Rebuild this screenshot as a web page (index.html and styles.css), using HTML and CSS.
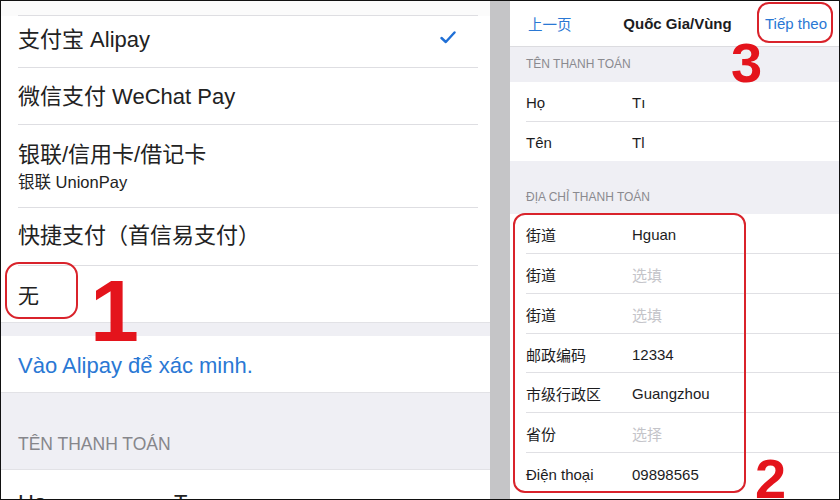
FILE: index.html
```html
<!DOCTYPE html>
<html lang="vi">
<head>
<meta charset="utf-8">
<title>Alipay payment setup</title>
<link rel="stylesheet" href="styles.css">
</head>
<body>
<div class="frame">
  <section class="pane pane-left">
    <div class="top-strip"><div class="top-line"></div></div>
    <div class="opt h52 up5"><span>支付宝 Alipay</span>
      <svg class="check" width="16" height="13" viewBox="0 0 16 13"><polyline points="1.5,7 5.8,11 14.5,1.5" fill="none" stroke="#1f6fd6" stroke-width="2.4" stroke-linecap="round" stroke-linejoin="round"/></svg>
    </div>
    <div class="opt h57 up3"><span>微信支付 WeChat Pay</span></div>
    <div class="opt opt-two h83">
      <span>银联/信用卡/借记卡</span>
      <span class="sub">银联 UnionPay</span>
    </div>
    <div class="opt h58 up4"><span>快捷支付（首信易支付）</span></div>
    <div class="opt opt-last h56"><span class="none">无</span></div>
    <div class="band h14"></div>
    <div class="link-row"><span>Vào Alipay để xác minh.</span></div>
    <div class="band band-head"><span>TÊN THANH TOÁN</span></div>
    <div class="name-row"><span class="nlabel">Họ</span><span>T</span></div>
  </section>
  <div class="divider"></div>
  <section class="pane pane-right">
    <nav class="navbar">
      <span class="nav-back">上一页</span>
      <span class="nav-title">Quốc Gia/Vùng</span>
      <span class="nav-next">Tiếp theo</span>
    </nav>
    <div class="sec sec-first">TÊN THANH TOÁN</div>
    <div class="frow r40"><span class="flabel">Họ</span><span class="fval">Tı</span></div>
    <div class="frow r39 nol"><span class="flabel">Tên</span><span class="fval">Tl</span></div>
    <div class="sec sec-second">ĐỊA CHỈ THANH TOÁN</div>
    <div class="frow r40"><span class="flabel">街道</span><span class="fval">Hguan</span></div>
    <div class="frow r40"><span class="flabel">街道</span><span class="fval ph">选填</span></div>
    <div class="frow r40"><span class="flabel">街道</span><span class="fval ph">选填</span></div>
    <div class="frow r39"><span class="flabel">邮政编码</span><span class="fval">12334</span></div>
    <div class="frow r40"><span class="flabel">市级行政区</span><span class="fval">Guangzhou</span></div>
    <div class="frow r40"><span class="flabel">省份</span><span class="fval ph">选择</span></div>
    <div class="frow r40 nol"><span class="flabel">Điện thoại</span><span class="fval">09898565</span></div>
  </section>

  <div class="ring ring-1"></div>
  <div class="num num-1">1</div>
  <div class="ring ring-3"></div>
  <div class="num num-3">3</div>
  <div class="ring ring-2"></div>
  <div class="num num-2">2</div>
</div>
</body>
</html>
```
FILE: styles.css
```css
html, body {
  margin: 0;
  padding: 0;
  background: #fff;
}
body {
  width: 840px;
  height: 500px;
  overflow: hidden;
  font-family: "Liberation Sans", "Noto Sans CJK SC", sans-serif;
  color: #1c1c1e;
}
.frame {
  position: relative;
  box-sizing: border-box;
  width: 840px;
  height: 500px;
  border: 1px solid #111;
  display: flex;
  overflow: hidden;
}
.pane {
  background: #fff;
  display: flex;
  flex-direction: column;
}
.pane-left {
  width: 489px;
  flex: none;
}
.divider {
  width: 20px;
  flex: none;
  background: #c5c5c7;
}
.pane-right {
  flex: 1;
  min-width: 0;
}

/* left pane */
.top-strip {
  height: 15px;
  flex: none;
  background: #fbfbfb;
  box-sizing: border-box;
}
.top-line {
  height: 14px;
  margin: 0 12px 0 17px;
  border-bottom: 1px solid #dedee2;
}
.opt {
  flex: none;
  box-sizing: border-box;
  margin: 0 12px 0 17px;
  border-bottom: 1px solid #dedee2;
  display: flex;
  align-items: center;
  font-size: 22px;
  color: #222;
}
.up5 { padding-bottom: 9px; }
.up3 { padding-bottom: 4px; }
.up4 { padding-bottom: 7px; }
.opt-last { border-bottom: none; padding-bottom: 1px; }
.opt-two {
  flex-direction: column;
  align-items: flex-start;
  justify-content: center;
  padding-bottom: 4px;
}
.opt-two .sub {
  font-size: 16.5px;
  margin-top: 1px;
}
.check {
  margin-left: auto;
  margin-right: 22px;
}
.none { font-size: 21px; }
.h52 { height: 52px; }
.h57 { height: 57px; }
.h83 { height: 83px; }
.h58 { height: 58px; }
.h56 { height: 56px; }
.h14 { height: 14px; }
.band {
  flex: none;
  background: #efeff4;
  border-top: 1px solid #e2e2e6;
  box-sizing: border-box;
}
.link-row {
  flex: none;
  height: 56px;
  box-sizing: border-box;
  display: flex;
  align-items: center;
  padding: 4px 0 0 17px;
  font-size: 22px;
  color: #2a78d4;
}
.band-head {
  height: 78px;
  display: flex;
  align-items: flex-end;
  padding: 0 0 14px 17px;
  font-size: 17.5px;
  color: #86868b;
  border-bottom: 1px solid #e2e2e6;
}
.name-row {
  flex: none;
  height: 57px;
  display: flex;
  align-items: center;
  padding: 8px 0 0 17px;
  box-sizing: border-box;
  font-size: 22px;
  color: #222;
}
.nlabel { width: 156px; }

/* right pane */
.navbar {
  flex: none;
  height: 46px;
  box-sizing: border-box;
  border-bottom: 1px solid #dcdce0;
  display: grid;
  grid-template-columns: 1fr auto 1fr;
  align-items: center;
  padding: 0 12px 0 18px;
  font-size: 15px;
}
.nav-back { color: #2a78d4; font-size: 14.5px; justify-self: start; }
.nav-title { font-weight: bold; color: #1c1c1e; }
.nav-next { color: #2a78d4; justify-self: end; }
.sec {
  flex: none;
  background: #efeff4;
  box-sizing: border-box;
  display: flex;
  align-items: flex-end;
  padding-left: 16px;
  font-size: 12px;
  color: #8a8a8f;
}
.sec-first { height: 35px; padding-bottom: 11px; }
.sec-second { height: 53px; padding-bottom: 10px; }
.frow {
  flex: none;
  box-sizing: border-box;
  margin-left: 16px;
  border-bottom: 1px solid #e0e0e4;
  display: flex;
  align-items: center;
  padding-top: 2px;
  font-size: 15px;
  color: #1c1c1e;
}
.frow.nol { border-bottom: none; }
.r40 { height: 40px; }
.r39 { height: 39px; }
.flabel { width: 106px; flex: none; }
.fval { flex: 1; }
.fval.ph { color: #c4c4c9; }

/* annotations */
.ring {
  position: absolute;
  box-sizing: border-box;
  border: 2.5px solid #d9232b;
}
.ring-1 { left: 4px; top: 261px; width: 73px; height: 57px; border-radius: 14px; }
.ring-3 { left: 756px; top: 1px; width: 76px; height: 41px; border-radius: 12px; }
.ring-2 { left: 512px; top: 212px; width: 233px; height: 280px; border-radius: 12px; }
.num {
  position: absolute;
  font-family: "Liberation Sans", sans-serif;
  font-weight: bold;
  color: #e4141c;
  line-height: 1;
}
.num-1 { left: 89px; top: 266px; font-size: 88px; }
.num-3 { left: 730px; top: 34px; font-size: 56px; }
.num-2 { left: 754px; top: 450px; font-size: 56px; }
```
